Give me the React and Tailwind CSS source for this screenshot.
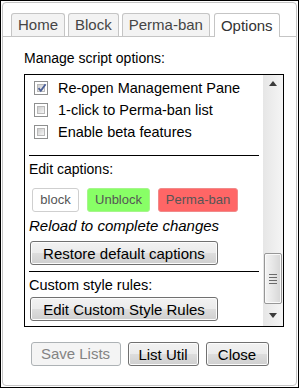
import React from 'react';

const tabs = ['Home', 'Block', 'Perma-ban', 'Options'];

const winBtn =
  'h-[24px] flex items-center justify-center border border-[#707070] rounded-[3px] bg-[linear-gradient(#f2f2f2_0%,#ebebeb_50%,#dddddd_51%,#cfcfcf_100%)] shadow-[inset_0_0_0_1px_#fcfcfc] text-[15px] leading-[17px] text-black';

function Checkbox({ checked }) {
  return (
    <span className="w-[14px] h-[14px] shrink-0 border border-[#8e8f8f] bg-white p-[2px] flex">
      <span className="relative flex-1 border border-[#b9b9b9] bg-[linear-gradient(135deg,#cdcdcd,#f6f6f6)]">
        {checked && (
          <svg className="absolute -left-[2px] -top-[3px]" width="12" height="12" viewBox="0 0 12 12">
            <path d="M2.5 6.2 L4.8 8.8 L9.6 2.2" fill="none" stroke="#4b5f96" strokeWidth="1.8" />
          </svg>
        )}
      </span>
    </span>
  );
}

function OptionRow({ checked, label }) {
  return (
    <div className="h-[22px] flex items-center gap-[10px] pl-[9px]">
      <Checkbox checked={checked} />
      <span className="text-[14.5px] leading-[17px] text-black">{label}</span>
    </div>
  );
}

function ScrollBar() {
  return (
    <div className="w-[20px] flex flex-col bg-[linear-gradient(90deg,#e6e6e6,#f5f5f5)]">
      <div className="h-[17px] flex items-center justify-center">
        <svg width="8" height="5" viewBox="0 0 8 5">
          <path d="M0 5 L4 0 L8 5 Z" fill="#3c3c3c" />
        </svg>
      </div>
      <div className="flex-1" />
      <div className="mx-[1px] h-[51px] border border-[#979797] rounded-[2px] bg-[linear-gradient(90deg,#f4f4f4,#e6e6e6_50%,#d6d6d6)] shadow-[inset_0_0_0_1px_#fafafa] flex flex-col items-center justify-center gap-[2px]">
        <span className="w-[8px] h-[1px] bg-[#6a6a6a]" />
        <span className="w-[8px] h-[1px] bg-[#6a6a6a]" />
        <span className="w-[8px] h-[1px] bg-[#6a6a6a]" />
        <span className="w-[8px] h-[1px] bg-[#6a6a6a]" />
      </div>
      <div className="h-[22px] flex items-center justify-center">
        <svg width="8" height="5" viewBox="0 0 8 5">
          <path d="M0 0 L4 5 L8 0 Z" fill="#3c3c3c" />
        </svg>
      </div>
    </div>
  );
}

export default function App() {
  return (
    <div className="w-[299px] h-[388px] border border-black bg-white p-[1px] flex font-['Liberation_Sans',Arial,sans-serif]">
      <div className="flex-1 flex flex-col border border-[#c5c5c5] rounded-[4px]">
        <div className="mt-[10px] flex items-end gap-[3px] pl-[8px] border-b border-[#c5c5c5]">
          {tabs.map((t) =>
            t === 'Options' ? (
              <div
                key={t}
                className="h-[24px] -mb-px ml-[1px] px-[6px] pt-[1px] flex items-center border border-b-0 border-[#c5c5c5] rounded-t-[3px] bg-white text-[15px] text-[#333]"
              >
                {t}
              </div>
            ) : (
              <div
                key={t}
                className="h-[23px] px-[6px] pt-[1px] flex items-center border border-b-0 border-[#c5c5c5] rounded-t-[3px] bg-[#f3f3f3] text-[15px] text-[#454545]"
              >
                {t}
              </div>
            )
          )}
        </div>

        <div className="pl-[21px] flex flex-col">
          <div className="mt-[13px] text-[14px] leading-[16px] text-black">Manage script options:</div>

          <div className="mt-[8px] w-[260px] h-[253px] border border-black flex">
            <div className="flex-1 overflow-hidden pt-[2px]">
              <OptionRow checked label="Re-open Management Pane" />
              <OptionRow label="1-click to Perma-ban list" />
              <OptionRow label="Enable beta features" />

              <div className="ml-[4px] mr-[4px] mt-[12px] h-px bg-black" />
              <div className="pl-[4px] mt-[5px] text-[14px] leading-[16px] text-black">Edit captions:</div>

              <div className="mt-[11px] pl-[7px] flex gap-[8px] text-[13px] text-[#555]">
                <span className="h-[24px] w-[47px] flex items-center justify-center rounded-[3px] border border-[#cfcfcf] bg-white">block</span>
                <span className="h-[24px] w-[63px] flex items-center justify-center rounded-[3px] border border-[#a6f58c] bg-[#88ff66]">Unblock</span>
                <span className="h-[24px] w-[80px] flex items-center justify-center rounded-[3px] border border-[#f08a8a] bg-[#ff6666]">Perma-ban</span>
              </div>

              <div className="pl-[4px] mt-[5px] text-[15px] leading-[17px] italic text-black">Reload to complete changes</div>
              <div className="pl-[5px] mt-[7px]">
                <button className={`${winBtn} w-[188px]`}>Restore default captions</button>
              </div>

              <div className="ml-[4px] mr-[4px] mt-[6px] h-px bg-black" />
              <div className="pl-[4px] mt-[5px] text-[14.5px] leading-[16px] text-black">Custom style rules:</div>
              <div className="pl-[5px] mt-[4px]">
                <button className={`${winBtn} w-[188px]`}>Edit Custom Style Rules</button>
              </div>
            </div>
            <ScrollBar />
          </div>
        </div>

        <div className="mt-[15px] flex justify-center gap-[7px]">
          <button className="h-[24px] w-[90px] flex items-center justify-center border border-[#adb2b5] rounded-[3px] bg-[#f4f4f4] text-[15px] text-[#838383]">
            Save Lists
          </button>
          <button className={`${winBtn} w-[71px]`}>List Util</button>
          <button className={`${winBtn} w-[63px]`}>Close</button>
        </div>
      </div>
    </div>
  );
}
